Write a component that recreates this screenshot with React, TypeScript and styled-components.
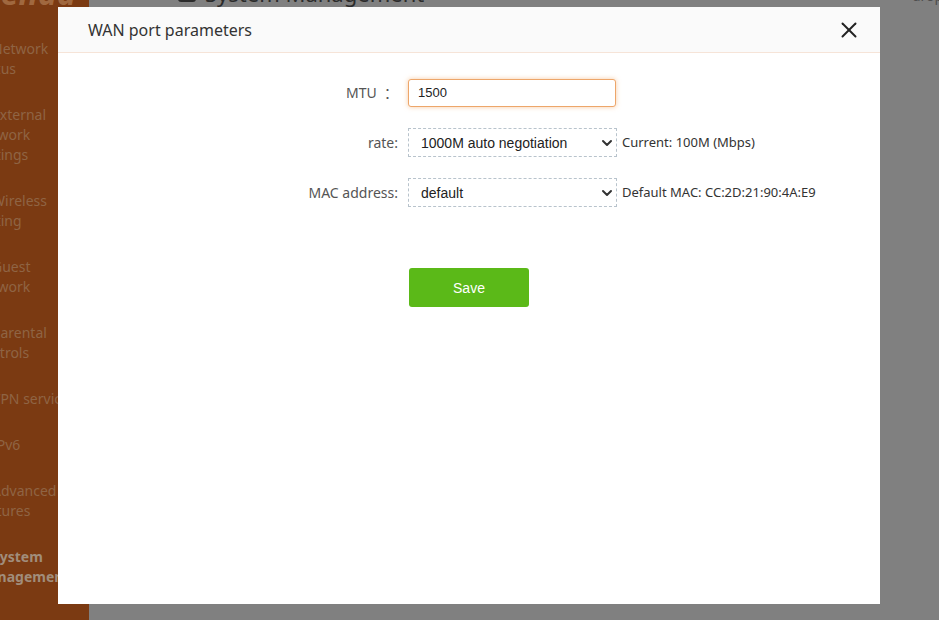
import styled, { createGlobalStyle } from "styled-components";
import { ChevronDown, X } from "lucide-react";

const menu = [
  { label: "Network status" },
  { label: "External network settings" },
  { label: "Wireless setting" },
  { label: "Guest network" },
  { label: "Parental controls" },
  { label: "VPN service" },
  { label: "IPv6" },
  { label: "Advanced features" },
  { label: "System Management", active: true },
];

const App = () => {
  return (
    <>
      <GlobalStyle />
      <Page>
        <Sidebar>
          <Logo>Tenda</Logo>
          {menu.map((item) => (
            <NavItem key={item.label} $active={!!item.active}>
              {item.label}
            </NavItem>
          ))}
        </Sidebar>
        <Main>
          <TopBar>
            <PageTitle>
              <svg width="18" height="18" viewBox="0 0 18 18" fill="none">
                <rect x="1" y="1" width="16" height="16" rx="2" stroke="#2b2b2b" strokeWidth="2" />
                <rect x="6" y="9" width="6" height="4" fill="#2b2b2b" />
              </svg>
              System Management
            </PageTitle>
            <UserText>drop out</UserText>
          </TopBar>
        </Main>
      </Page>

      <Overlay>
        <Modal>
          <ModalHeader>
            <ModalTitle>WAN port parameters</ModalTitle>
            <CloseButton aria-label="close">
              <X size={26} strokeWidth={1.8} />
            </CloseButton>
          </ModalHeader>
          <Form onSubmit={(e) => e.preventDefault()}>
            <Row>
              <Label>MTU &nbsp;：</Label>
              <TextInput defaultValue="1500" />
            </Row>
            <Row>
              <Label>rate:</Label>
              <SelectWrap>
                <Select defaultValue="1000">
                  <option value="1000">1000M auto negotiation</option>
                  <option value="100">100M full duplex</option>
                  <option value="10">10M full duplex</option>
                </Select>
                <Chevron>
                  <ChevronDown size={16} strokeWidth={3} />
                </Chevron>
              </SelectWrap>
              <Note>Current: 100M (Mbps)</Note>
            </Row>
            <Row>
              <Label>MAC address:</Label>
              <SelectWrap>
                <Select defaultValue="default">
                  <option value="default">default</option>
                  <option value="clone">clone local MAC</option>
                  <option value="manual">manual</option>
                </Select>
                <Chevron>
                  <ChevronDown size={16} strokeWidth={3} />
                </Chevron>
              </SelectWrap>
              <Note>Default MAC: CC:2D:21:90:4A:E9</Note>
            </Row>
            <Actions>
              <SaveButton type="submit">Save</SaveButton>
            </Actions>
          </Form>
        </Modal>
      </Overlay>
    </>
  );
};

export default App;

const GlobalStyle = createGlobalStyle`
  html, body {
    margin: 0;
    padding: 0;
    background: #808080;
  }
  body {
    font-family: "Noto Sans", "Noto Sans CJK SC", "Liberation Sans", sans-serif;
    overflow: hidden;
  }
`;

const Page = styled.div`
  display: flex;
  width: 939px;
  height: 620px;
  overflow: hidden;
`;

const Sidebar = styled.nav`
  width: 89px;
  flex-shrink: 0;
  background: #7b3a12;
  overflow: hidden;
`;

const Logo = styled.div`
  margin-top: -23px;
  margin-left: -14px;
  height: 49px;
  font-size: 32px;
  line-height: 32px;
  font-weight: 700;
  font-style: italic;
  color: #a0683f;
`;

const NavItem = styled.div<{ $active: boolean }>`
  margin-left: -24px;
  width: 104px;
  padding: 13px 0;
  font-size: 14px;
  line-height: 20px;
  text-indent: 16px;
  font-weight: ${(props) => (props.$active ? 700 : 400)};
  color: ${(props) => (props.$active ? "#a18d7b" : "#8f6444")};
`;

const Main = styled.main`
  flex: 1;
  display: flex;
  flex-direction: column;
  background: #808080;
`;

const TopBar = styled.div`
  display: flex;
  justify-content: space-between;
  align-items: flex-start;
  margin-top: -22px;
  padding-left: 89px;
`;

const PageTitle = styled.h1`
  margin: 0;
  display: flex;
  align-items: center;
  gap: 9px;
  font-size: 22px;
  line-height: 30px;
  font-weight: 400;
  color: #2b2b2b;
`;

const UserText = styled.span`
  width: 27px;
  padding-top: 8px;
  font-size: 14px;
  color: #4d4d4d;
  white-space: nowrap;
`;

const Overlay = styled.div`
  position: fixed;
  inset: 0;
  display: flex;
  justify-content: flex-start;
  align-items: flex-start;
  padding: 7px 0 0 58px;
`;

const Modal = styled.div`
  width: 822px;
  height: 597px;
  background: #fff;
  display: flex;
  flex-direction: column;
`;

const ModalHeader = styled.div`
  height: 46px;
  box-sizing: border-box;
  display: flex;
  align-items: center;
  justify-content: space-between;
  padding: 0 18px 0 30px;
  background: #fafafa;
  border-bottom: 1px solid #f6e4d8;
`;

const ModalTitle = styled.h2`
  margin: 0;
  font-size: 16px;
  font-weight: 400;
  color: #333;
`;

const CloseButton = styled.button`
  display: flex;
  padding: 0;
  border: none;
  background: none;
  color: #222;
  cursor: pointer;
`;

const Form = styled.form`
  display: flex;
  flex-direction: column;
  gap: 21px;
  padding-top: 25px;
`;

const Row = styled.div`
  display: flex;
  align-items: center;
  height: 29px;
`;

const Label = styled.label`
  width: 350px;
  padding-right: 10px;
  box-sizing: border-box;
  flex-shrink: 0;
  text-align: right;
  font-size: 14px;
  line-height: 29px;
  color: #555;
`;

const TextInput = styled.input`
  width: 208px;
  height: 28px;
  box-sizing: border-box;
  padding: 0 9px;
  border: 1px solid #eda66a;
  border-radius: 3px;
  box-shadow: 0 0 5px rgba(240, 160, 90, 0.55);
  font-family: "Liberation Sans", Arial, sans-serif;
  font-size: 13px;
  color: #222;
  outline: none;
`;

const SelectWrap = styled.div`
  position: relative;
  width: 209px;
  height: 29px;
  flex-shrink: 0;
`;

const Select = styled.select`
  appearance: none;
  width: 100%;
  height: 100%;
  box-sizing: border-box;
  padding: 0 12px;
  border: 1px dashed #b8c3cc;
  border-radius: 0;
  background: #fff;
  font-family: "Liberation Sans", Arial, sans-serif;
  font-size: 14px;
  color: #222;
  outline: none;
`;

const Chevron = styled.span`
  position: absolute;
  right: 2px;
  top: 50%;
  transform: translateY(-50%);
  display: flex;
  color: #333;
  pointer-events: none;
`;

const Note = styled.span`
  margin-left: 5px;
  font-size: 13px;
  line-height: 29px;
  color: #333;
  white-space: nowrap;
`;

const Actions = styled.div`
  margin-top: 40px;
  padding-left: 351px;
`;

const SaveButton = styled.button`
  width: 120px;
  height: 39px;
  border: none;
  border-radius: 3px;
  background: #5bb918;
  color: #fff;
  font-family: "Liberation Sans", Arial, sans-serif;
  font-size: 14px;
  cursor: pointer;
`;
